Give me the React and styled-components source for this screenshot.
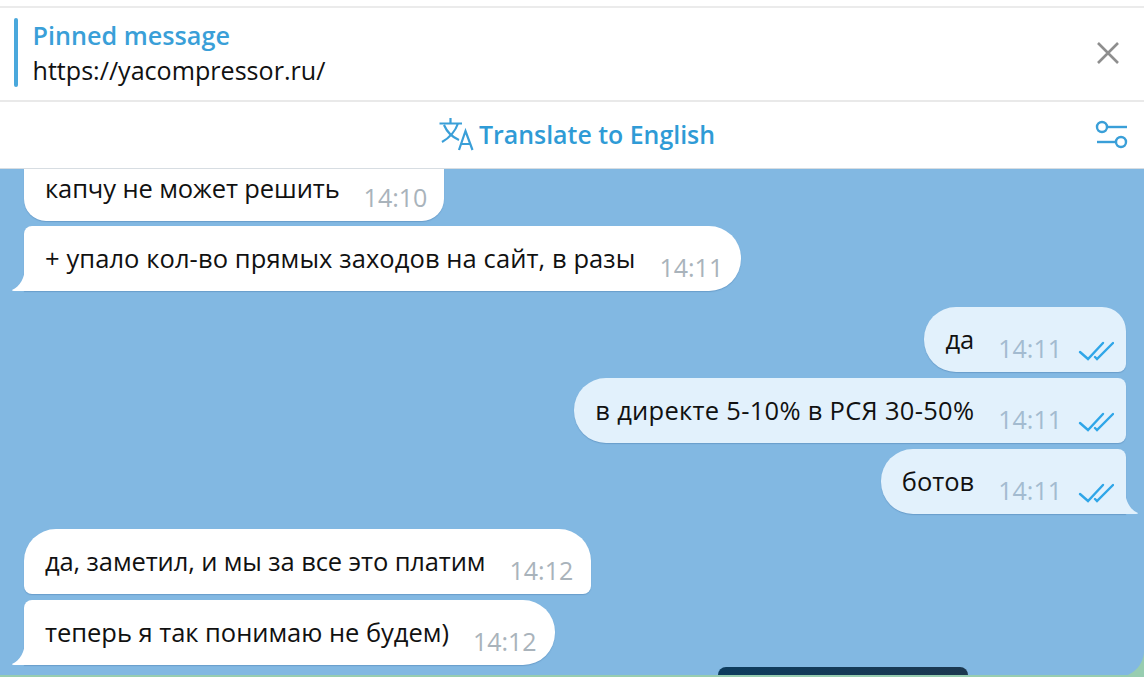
import React from "react";
import styled, { createGlobalStyle } from "styled-components";

const Global = createGlobalStyle`
  *, *::before, *::after { box-sizing: border-box; }
  html, body { margin: 0; padding: 0; background: #fff; }
  body { font-family: "Open Sans", "Noto Sans", "Liberation Sans", sans-serif; }
`;

const Page = styled.div`
  width: 1144px;
  height: 677px;
  display: flex;
  flex-direction: column;
  overflow: hidden;
  background: #fff;
`;

const TopRule = styled.div`
  height: 8px;
  border-bottom: 2px solid #ebebeb;
  flex: none;
`;

const PinnedBar = styled.header`
  height: 94px;
  flex: none;
  display: flex;
  align-items: center;
  padding: 0 24px 3px 14px;
  border-bottom: 2px solid #e9e9e9;
`;

const PinnedAccent = styled.div`
  width: 4px;
  height: 69px;
  border-radius: 2px;
  background: #4aa8dc;
  margin-right: 14.5px;
  flex: none;
`;

const PinnedText = styled.div`
  flex: 1;
  display: flex;
  flex-direction: column;
  gap: 1px;
`;

const PinnedTitle = styled.div`
  color: #3a9fd8;
  font-size: 25.2px;
  line-height: 34px;
  font-weight: 600;
`;

const PinnedLink = styled.div`
  color: #111;
  font-size: 25.1px;
  line-height: 34px;
`;

const IconButton = styled.button`
  border: 0;
  padding: 0;
  background: none;
  display: flex;
`;

const TranslateBar = styled.div`
  height: 67px;
  flex: none;
  display: flex;
  align-items: center;
  padding: 0 15px 3px 439px;
  color: #2f9bd6;
  font-size: 24.9px;
  font-weight: 600;
  border-bottom: 1px solid #d7dde2;
`;

const TranslateLabel = styled.span`
  flex: 1;
  margin-left: 5px;
`;

const Chat = styled.main`
  flex: 1;
  min-height: 0;
  display: flex;
  flex-direction: column;
  padding: 0 18px 0 24px;
  position: relative;
  background: linear-gradient(#82b8e2 calc(100% - 2px), #97cdb0 0);
`;

const Bubble = styled.div`
  position: relative;
  flex: none;
  align-self: ${(p) => (p.$out ? "flex-end" : "flex-start")};
  height: ${(p) => p.$h || 65}px;
  margin-top: ${(p) => p.$mt ?? 6}px;
  display: flex;
  align-items: flex-start;
  padding: ${(p) => (p.$clip ? "2px 17px 0 21px" : p.$out ? "15px 12px 0 21px" : "15px 18px 0 21px")};
  background: ${(p) => (p.$out ? "#e2f1fc" : "#fff")};
  border-radius: ${(p) => p.$r};
  box-shadow: 0 1px 1px rgba(60, 110, 160, 0.35);
`;

const Message = styled.span`
  color: #111;
  font-size: 25.5px;
  line-height: 34px;
  white-space: nowrap;
  letter-spacing: ${(p) => p.$track || 0}px;
`;

const Time = styled.span`
  color: ${(p) => (p.$out ? "#a3bbd0" : "#a9b3bb")};
  font-size: 25px;
  line-height: 30px;
  margin: 11px 0 0 24px;
  white-space: nowrap;
`;

const Ticks = styled.svg`
  width: 36px;
  height: 20px;
  margin: 19px 0 0 16px;
  flex: none;
`;

const Tail = styled.svg`
  position: absolute;
  bottom: 0;
  width: 14px;
  height: 24px;
  ${(p) => (p.$out ? "right: -12px;" : "left: -12px;")}
`;

const Media = styled.div`
  flex: none;
  align-self: flex-end;
  width: 250px;
  height: 8px;
  margin: 2px 158px 0 0;
  border-radius: 10px 10px 0 0;
  background: linear-gradient(90deg, #0d3c5e, #1c3850);
`;

const Corner = styled.svg`
  position: absolute;
  right: 0;
  bottom: 0;
  width: 26px;
  height: 26px;
`;

const TicksIcon = () => (
  <Ticks viewBox="0 0 36 20" fill="none" stroke="#2fa6e8" strokeWidth="2.4" strokeLinecap="round">
    <path d="M2 11 L10 18 L25 2" />
    <path d="M17 16 L19 18 L35 2" />
  </Ticks>
);

const InTail = () => (
  <Tail $out={false} viewBox="0 0 14 24">
    <path d="M13 0 C13 10 8 20 0 23 Q0 24 2 24 L14 24 L14 0 Z" fill="#fff" />
  </Tail>
);

const OutTail = () => (
  <Tail $out viewBox="0 0 14 24">
    <path d="M1 0 C1 10 6 20 14 23 Q14 24 12 24 L0 24 L0 0 Z" fill="#e2f1fc" />
  </Tail>
);

export default function App() {
  return (
    <Page>
      <Global />
      <TopRule />
      <PinnedBar>
        <PinnedAccent />
        <PinnedText>
          <PinnedTitle>Pinned message</PinnedTitle>
          <PinnedLink>https://yacompressor.ru/</PinnedLink>
        </PinnedText>
        <IconButton aria-label="close">
          <svg width="24" height="24" viewBox="0 0 24 24" fill="none" stroke="#8e8e8e" strokeWidth="2.6">
            <path d="M2 2 L22 22 M22 2 L2 22" />
          </svg>
        </IconButton>
      </PinnedBar>
      <TranslateBar>
        <svg width="35" height="34" viewBox="0 0 35 34" fill="none" stroke="#3a9fd8" strokeWidth="2.2">
          <path d="M0.5 6.5 H23 M11.5 1 V6.5 M19 6.5 C16 15 10 21 3 25 M5 8 C8 15 13 20 20 23" />
          <path d="M20 33 L26.5 14 L33.5 33 M22.3 27 H31.2" />
        </svg>
        <TranslateLabel>Translate to English</TranslateLabel>
        <svg width="34" height="30" viewBox="0 0 34 30" fill="none" stroke="#3a9fd8" strokeWidth="2.4">
          <circle cx="7" cy="8" r="5" />
          <path d="M12 8 H32" />
          <path d="M2 23 H21" />
          <circle cx="26" cy="23" r="5" />
        </svg>
      </TranslateBar>
      <Chat>
        <Bubble $clip $h={52} $mt={0} $r="0 0 22px 22px">
          <Message $track={-0.1}>капчу не может решить</Message>
          <Time>14:10</Time>
        </Bubble>
        <Bubble $mt={5} $r="8px 32px 32px 0">
          <InTail />
          <Message $track={0.09}>+ упало кол-во прямых заходов на сайт, в разы</Message>
          <Time>14:11</Time>
        </Bubble>
        <Bubble $out $mt={16} $r="32px 24px 8px 32px">
          <Message>да</Message>
          <Time $out>14:11</Time>
          <TicksIcon />
        </Bubble>
        <Bubble $out $r="32px 8px 8px 32px">
          <Message $track={0.29}>в директе 5-10% в РСЯ 30-50%</Message>
          <Time $out>14:11</Time>
          <TicksIcon />
        </Bubble>
        <Bubble $out $r="32px 8px 0 32px">
          <OutTail />
          <Message>ботов</Message>
          <Time $out>14:11</Time>
          <TicksIcon />
        </Bubble>
        <Bubble $mt={15} $r="32px 32px 8px 8px">
          <Message $track={-0.11}>да, заметил, и мы за все это платим</Message>
          <Time>14:12</Time>
        </Bubble>
        <Bubble $r="8px 32px 32px 0">
          <InTail />
          <Message $track={-0.03}>теперь я так понимаю не будем)</Message>
          <Time>14:12</Time>
        </Bubble>
        <Media />
        <Corner viewBox="0 0 26 26">
          <path d="M26 0 C26 14 14 26 0 26 L26 26 Z" fill="#97cdb0" />
        </Corner>
      </Chat>
    </Page>
  );
}
